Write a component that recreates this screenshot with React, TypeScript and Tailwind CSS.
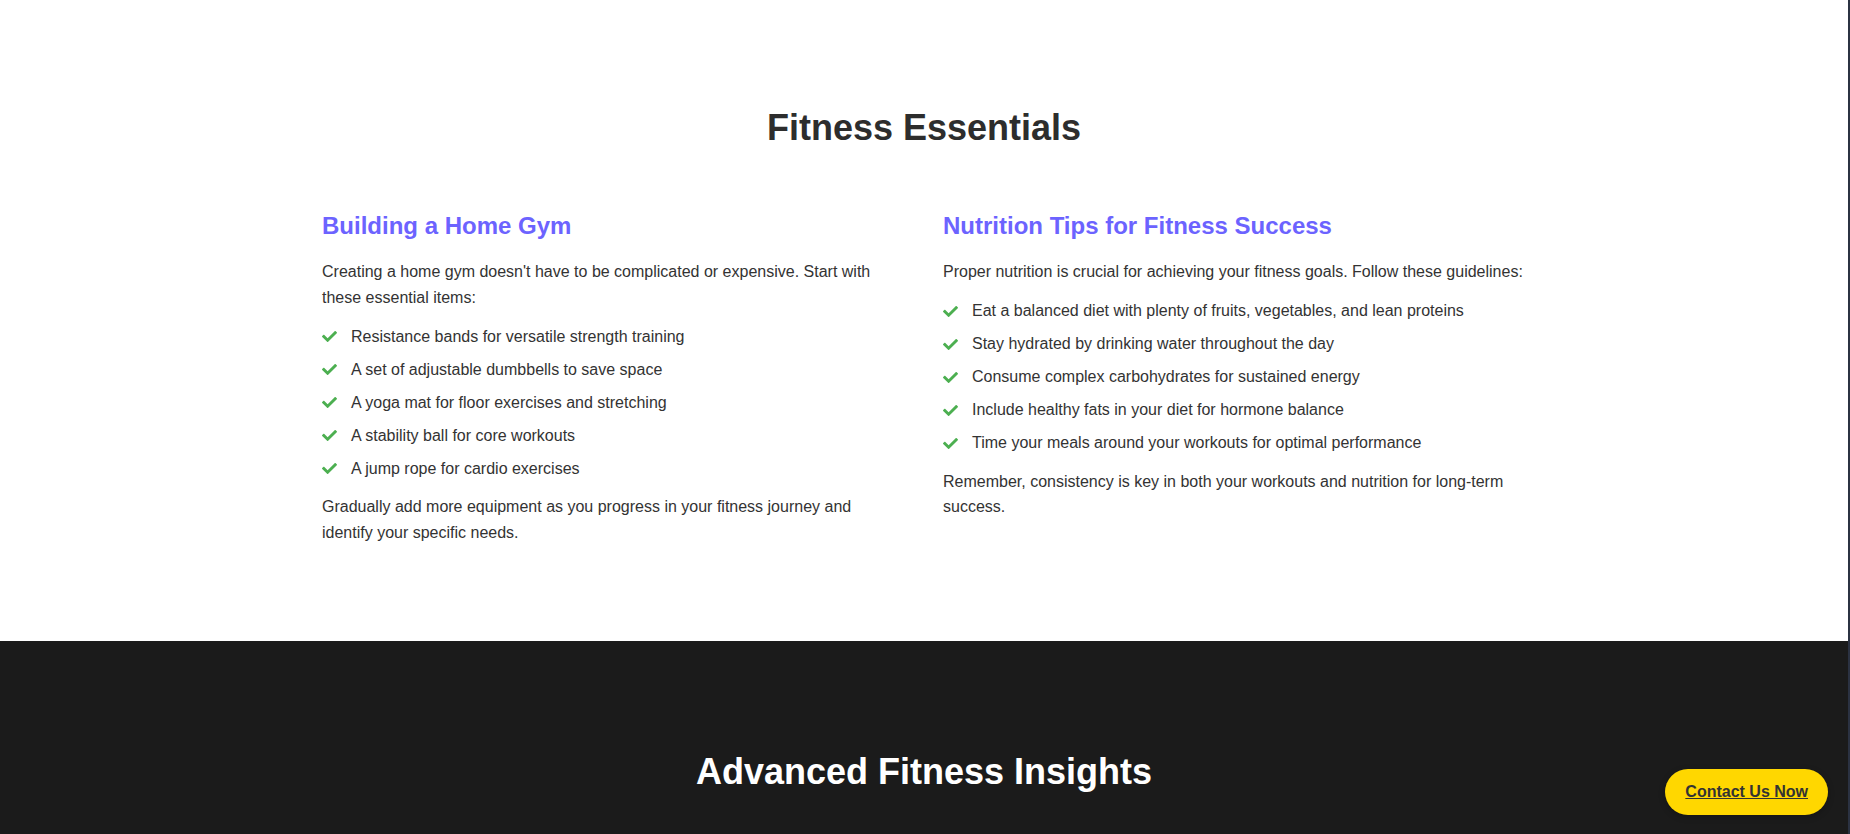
import { FaCheck } from 'react-icons/fa'

const gymItems = [
  'Resistance bands for versatile strength training',
  'A set of adjustable dumbbells to save space',
  'A yoga mat for floor exercises and stretching',
  'A stability ball for core workouts',
  'A jump rope for cardio exercises',
]

const nutritionItems = [
  'Eat a balanced diet with plenty of fruits, vegetables, and lean proteins',
  'Stay hydrated by drinking water throughout the day',
  'Consume complex carbohydrates for sustained energy',
  'Include healthy fats in your diet for hormone balance',
  'Time your meals around your workouts for optimal performance',
]

function CheckList({ items }: { items: string[] }) {
  return (
    <ul className="mb-[9px]">
      {items.map((item) => (
        <li key={item} className="flex h-[33px] items-center">
          <FaCheck className="mr-[14px] shrink-0 text-[#4caf50]" size={15} />
          <span>{item}</span>
        </li>
      ))}
    </ul>
  )
}

function Column({
  title,
  intro,
  items,
  outro,
}: {
  title: string
  intro: string
  items: string[]
  outro: string
}) {
  return (
    <div>
      <h3 className="mb-[19px] text-[24px] font-bold leading-[29px] text-[#6c63ff]">{title}</h3>
      <p className="mb-[10px]">{intro}</p>
      <CheckList items={items} />
      <p>{outro}</p>
    </div>
  )
}

export default function App() {
  return (
    <div
      className="flex h-[834px] w-full overflow-hidden bg-white text-[16px] leading-[1.6] text-[#333]"
      style={{ fontFamily: '"Liberation Sans", Arial, sans-serif' }}
    >
      <main className="relative flex-1">
        <section className="bg-white pt-[106px] pb-[95px]">
          <h2 className="mb-[62px] text-center text-[36px] font-bold leading-[1.2] text-[#2d2d2d]">
            Fitness Essentials
          </h2>
          <div className="mx-auto grid w-[1204px] grid-cols-2 gap-[38px]">
            <Column
              title="Building a Home Gym"
              intro="Creating a home gym doesn't have to be complicated or expensive. Start with these essential items:"
              items={gymItems}
              outro="Gradually add more equipment as you progress in your fitness journey and identify your specific needs."
            />
            <Column
              title="Nutrition Tips for Fitness Success"
              intro="Proper nutrition is crucial for achieving your fitness goals. Follow these guidelines:"
              items={nutritionItems}
              outro="Remember, consistency is key in both your workouts and nutrition for long-term success."
            />
          </div>
        </section>

        <section className="h-[400px] bg-[#1b1b1b] pt-[109px]">
          <h2 className="text-center text-[36px] font-bold leading-[1.2] text-white">
            Advanced Fitness Insights
          </h2>
        </section>

        <a
          href="#contact"
          className="absolute right-5 bottom-[19px] rounded-full bg-[#ffd700] px-5 py-[14px] text-[16px] font-bold leading-[18px] text-[#333] underline shadow-[0_2px_6px_rgba(0,0,0,0.25)]"
        >
          Contact Us Now
        </a>
      </main>
      <div className="w-[2px] shrink-0 bg-[#2b3242]" />
    </div>
  )
}
